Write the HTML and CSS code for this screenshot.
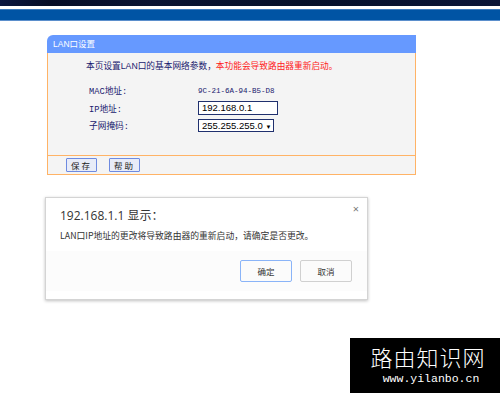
FILE: index.html
```html
<!DOCTYPE html>
<html lang="zh-CN">
<head>
    <meta charset="UTF-8">
    <title>LAN口设置</title>
    <link rel="stylesheet" href="styles.css">
</head>
<body>

<div class="topbar">
    <div class="topbar-dark"></div>
    <div class="topbar-blue"></div>
</div>

<div class="panel">
    <div class="panel-title">LAN口设置</div>
    <div class="panel-body">
        <p class="intro">本页设置LAN口的基本网络参数，<span class="warn">本功能会导致路由器重新启动。</span></p>
        <div class="row">
            <span class="label">MAC地址:</span>
            <span class="mac">9C-21-6A-94-B5-D8</span>
        </div>
        <div class="row">
            <span class="label">IP地址:</span>
            <span class="field">192.168.0.1</span>
        </div>
        <div class="row">
            <span class="label">子网掩码:</span>
            <span class="field select">255.255.255.0 <span class="arrow">▼</span></span>
        </div>
    </div>
    <div class="panel-foot">
        <button class="btn">保存</button>
        <button class="btn">帮助</button>
    </div>
</div>

<div class="dialog">
    <div class="dialog-head">192.168.1.1 显示：<span class="close">×</span></div>
    <div class="dialog-msg">LAN口IP地址的更改将导致路由器的重新启动，请确定是否更改。</div>
    <div class="dialog-foot">
        <button class="dbtn primary">确定</button>
        <button class="dbtn">取消</button>
    </div>
</div>

<div class="watermark">
    <div class="wm-title">路由知识网</div>
    <div class="wm-url">www.yilanbo.cn</div>
</div>

</body>
</html>
```

FILE: styles.css
```css
body {
    margin: 0;
    background-color: #fff;
    font-family: "Liberation Sans", "Noto Sans CJK SC", sans-serif;
    width: 500px;
    height: 393px;
    overflow: hidden;
    position: relative;
}
.topbar-dark {
    height: 6px;
    background: linear-gradient(90deg, #0b1640 0%, #060d26 10%, #0a1433 30%, #05102a 60%, #0b1538 100%);
    border-bottom: 3px solid #fff;
}
.topbar-blue {
    height: 10px;
    background-color: #0054a4;
    border-top: 1px solid #3d7cc0;
    border-bottom: 1px solid #5b8fcc;
}
.panel {
    margin: 14px 0 0 47px;
    width: 369px;
}
.panel-title {
    height: 18px;
    line-height: 18px;
    background-color: #6699ff;
    border-top-left-radius: 6px;
    color: #fff;
    font-size: 8.5px;
    padding-left: 6px;
}
.panel-body {
    background-color: #f4f4f4;
    border-left: 1px solid #ffb366;
    border-right: 1px solid #ffb366;
    height: 102px;
    padding-left: 38px;
    box-sizing: border-box;
    font-size: 8.7px;
    color: #1a1a6e;
}
.intro {
    margin: 0;
    padding-top: 6px;
    height: 23px;
    color: #1a1a6e;
}
.warn {
    color: #ff2020;
}
.row {
    display: flex;
    align-items: center;
    height: 17.5px;
    padding-left: 3px;
}
.label {
    width: 109px;
    font-family: "Liberation Mono", "Noto Sans CJK SC", monospace;
    font-size: 8.7px;
}
.mac {
    font-family: "Liberation Mono", monospace;
    font-size: 7.5px;
    color: #1a1a6e;
}
.field {
    box-sizing: border-box;
    width: 80px;
    height: 14px;
    line-height: 12px;
    border: 1px solid #20306e;
    background-color: #fff;
    color: #000;
    font-size: 9.5px;
    padding-left: 3px;
}
.select {
    width: 76px;
    height: 13px;
}
.arrow {
    font-size: 6px;
}
.panel-foot {
    height: 18px;
    background-color: #f4f4f4;
    border: 1px solid #ffb366;
    display: flex;
    align-items: center;
    gap: 12px;
    padding-left: 18px;
}
.btn {
    margin: 0;
    height: 14px;
    width: 31px;
    padding: 0;
    background-color: #e8ecf8;
    border: 1px solid #6e8ae0;
    border-radius: 1px;
    font-family: "Noto Sans CJK SC", sans-serif;
    font-size: 8.5px;
    letter-spacing: 2px;
    color: #222;
    line-height: 12px;
}
.dialog {
    position: absolute;
    left: 45px;
    top: 197px;
    width: 323px;
    height: 103px;
    box-sizing: border-box;
    background-color: #fff;
    border: 1px solid #d4d4d4;
    box-shadow: 0 1px 3px rgba(0, 0, 0, 0.25);
    font-family: "Noto Sans CJK SC", sans-serif;
}
.dialog-head {
    position: relative;
    padding: 9px 0 0 14px;
    height: 17px;
    font-family: "Open Sans", "Noto Sans CJK SC", sans-serif;
    font-size: 12px;
    line-height: 17px;
    color: #333;
}
.close {
    position: absolute;
    right: 8px;
    top: 2px;
    font-size: 11px;
    color: #777;
}
.dialog-msg {
    padding: 5px 0 0 14px;
    height: 22px;
    font-size: 8.8px;
    line-height: 14px;
    color: #333;
}
.dialog-foot {
    display: flex;
    justify-content: flex-end;
    gap: 8px;
    padding: 9px 15px 0 0;
    background-color: #fcfcfc;
    height: 40px;
    box-sizing: border-box;
}
.dbtn {
    margin: 0;
    width: 52px;
    height: 22px;
    background-color: #fbfbfb;
    border: 1px solid #d0d0d0;
    border-radius: 2px;
    font-family: "Noto Sans CJK SC", sans-serif;
    font-size: 8.5px;
    color: #333;
}
.dbtn.primary {
    border-color: #8ab4f8;
}
.watermark {
    position: absolute;
    right: 0;
    bottom: 0;
    width: 150px;
    height: 55px;
    background-color: #000;
    color: #fff;
    text-align: center;
}
.wm-title {
    font-family: "Noto Sans CJK SC", serif;
    font-weight: 300;
    font-size: 22px;
    line-height: 24px;
    padding-top: 6px;
    letter-spacing: 1px;
    padding-left: 6px;
}
.wm-url {
    font-family: "Liberation Mono", monospace;
    font-size: 11.5px;
    line-height: 14px;
    padding-top: 4px;
    padding-left: 12px;
}
```
